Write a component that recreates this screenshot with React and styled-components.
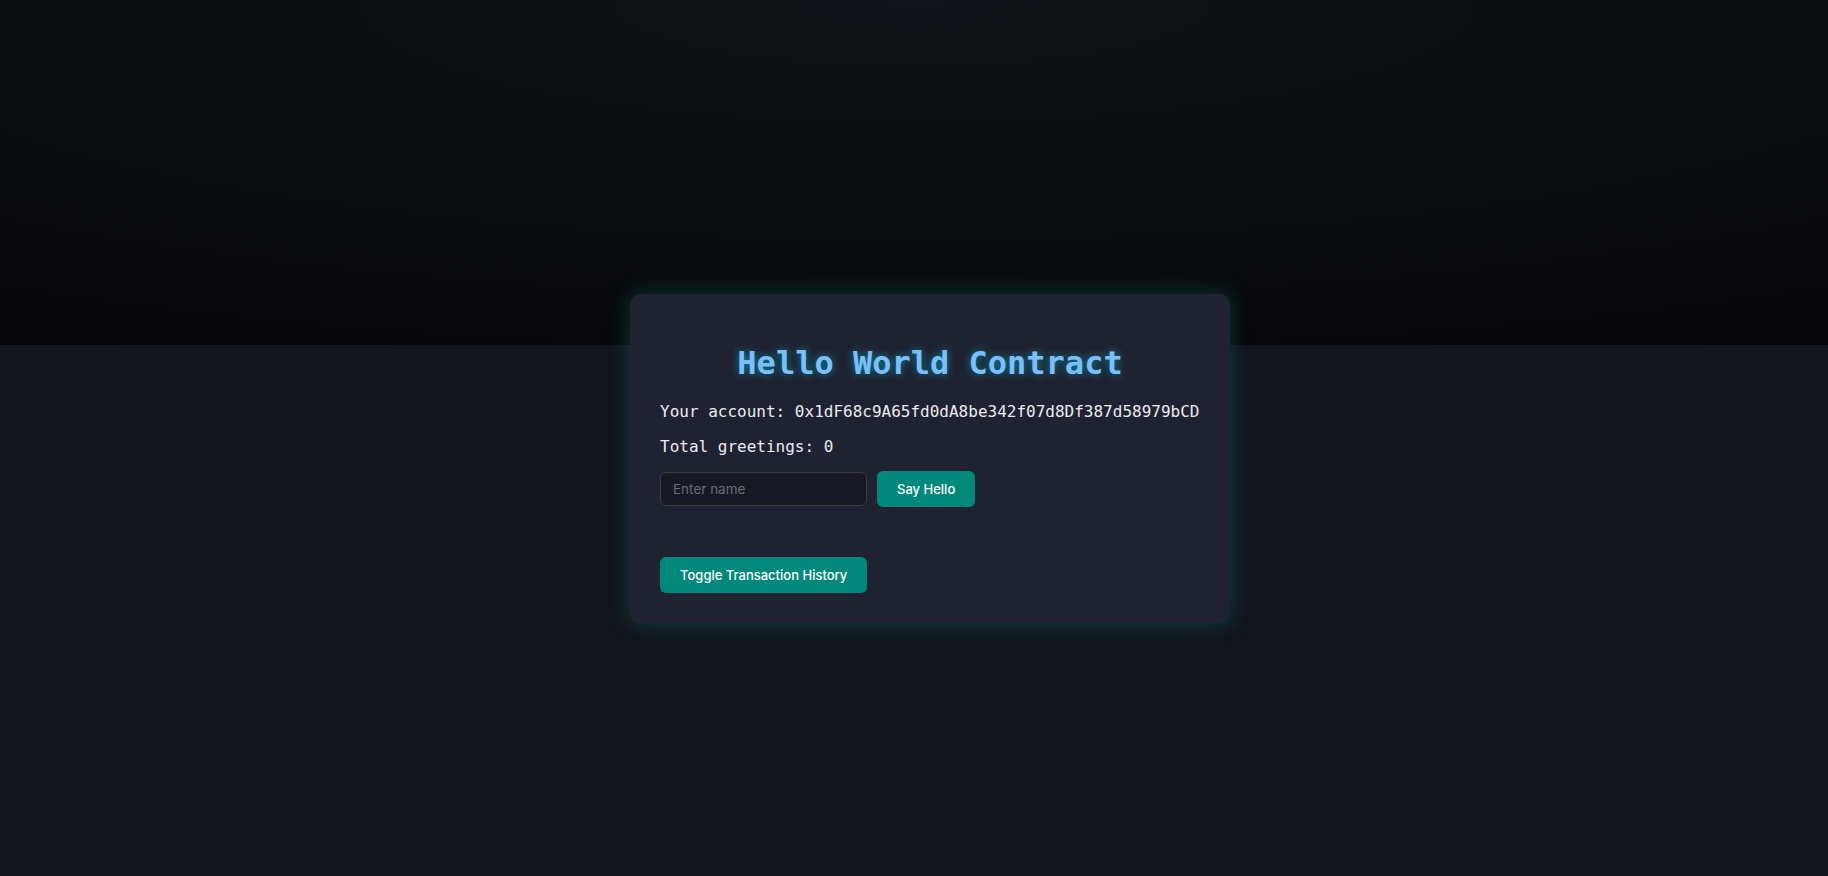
import React, { useState } from 'react'
import styled, { createGlobalStyle } from 'styled-components'

const GlobalStyle = createGlobalStyle`
    html, body {
        margin: 0;
        padding: 0;
        background: #12151c;
    }
    * {
        box-sizing: border-box;
    }
`;

const Page = styled.div`
    min-height: 876px;
    padding: 294px 0 0 32px;
    display: flex;
    justify-content: center;
    align-items: flex-start;
    background:
        radial-gradient(ellipse 120% 140% at 50% 0%, #111318 0%, #0a0b0e 55%, #040407 100%) top / 100% 345px no-repeat,
        #12151c;
`;

const Card = styled.div`
    width: 600px;
    padding: 32px 30px 30px;
    background: #1f2230;
    border-radius: 10px;
    box-shadow: 0 0 22px rgba(0, 150, 136, 0.35);
    font-family: "DejaVu Sans Mono", "Liberation Mono", monospace;
    color: #e8e8ec;
`;

const Title = styled.h1`
    margin: 18px 0 20px;
    text-align: center;
    font-size: 32px;
    font-weight: bold;
    color: #79c0ff;
    text-shadow: 0 0 8px rgba(0, 200, 220, 0.6);
`;

const Line = styled.p`
    margin: 16px 0 ${props => props.$last ? 15 : 16}px;
    font-size: 16px;
    white-space: nowrap;
    color: #ececf0;
`;

const Row = styled.div`
    display: flex;
    align-items: center;
    gap: 10px;
`;

const NameInput = styled.input`
    width: 207px;
    height: 34px;
    padding: 0 12px;
    background: #161922;
    border: 1px solid #3b3d44;
    border-radius: 6px;
    color: #e5e7eb;
    font-family: Inter, "Noto Sans", sans-serif;
    font-size: 13.5px;
    outline: none;

    &::placeholder {
        color: #6b6e78;
    }
`;

const Button = styled.button`
    height: 36px;
    padding: 0 20px;
    background: #00897b;
    border: none;
    border-radius: 6px;
    color: #ffffff;
    font-family: Inter, "Noto Sans", sans-serif;
    font-size: 13px;
    font-weight: 500;
    cursor: pointer;
`;

const History = styled.div`
    margin-top: 50px;
`;

const App = () => {
    const [name, setName] = useState('')
    return (
        <>
            <GlobalStyle />
            <Page>
                <Card>
                    <Title>Hello World Contract</Title>
                    <Line>Your account: 0x1dF68c9A65fd0dA8be342f07d8Df387d58979bCD</Line>
                    <Line $last>Total greetings: 0</Line>
                    <Row>
                        <NameInput placeholder="Enter name" value={name} onChange={(e) => setName(e.target.value)} />
                        <Button>Say Hello</Button>
                    </Row>
                    <History>
                        <Button>Toggle Transaction History</Button>
                    </History>
                </Card>
            </Page>
        </>
    )
}

export default App
